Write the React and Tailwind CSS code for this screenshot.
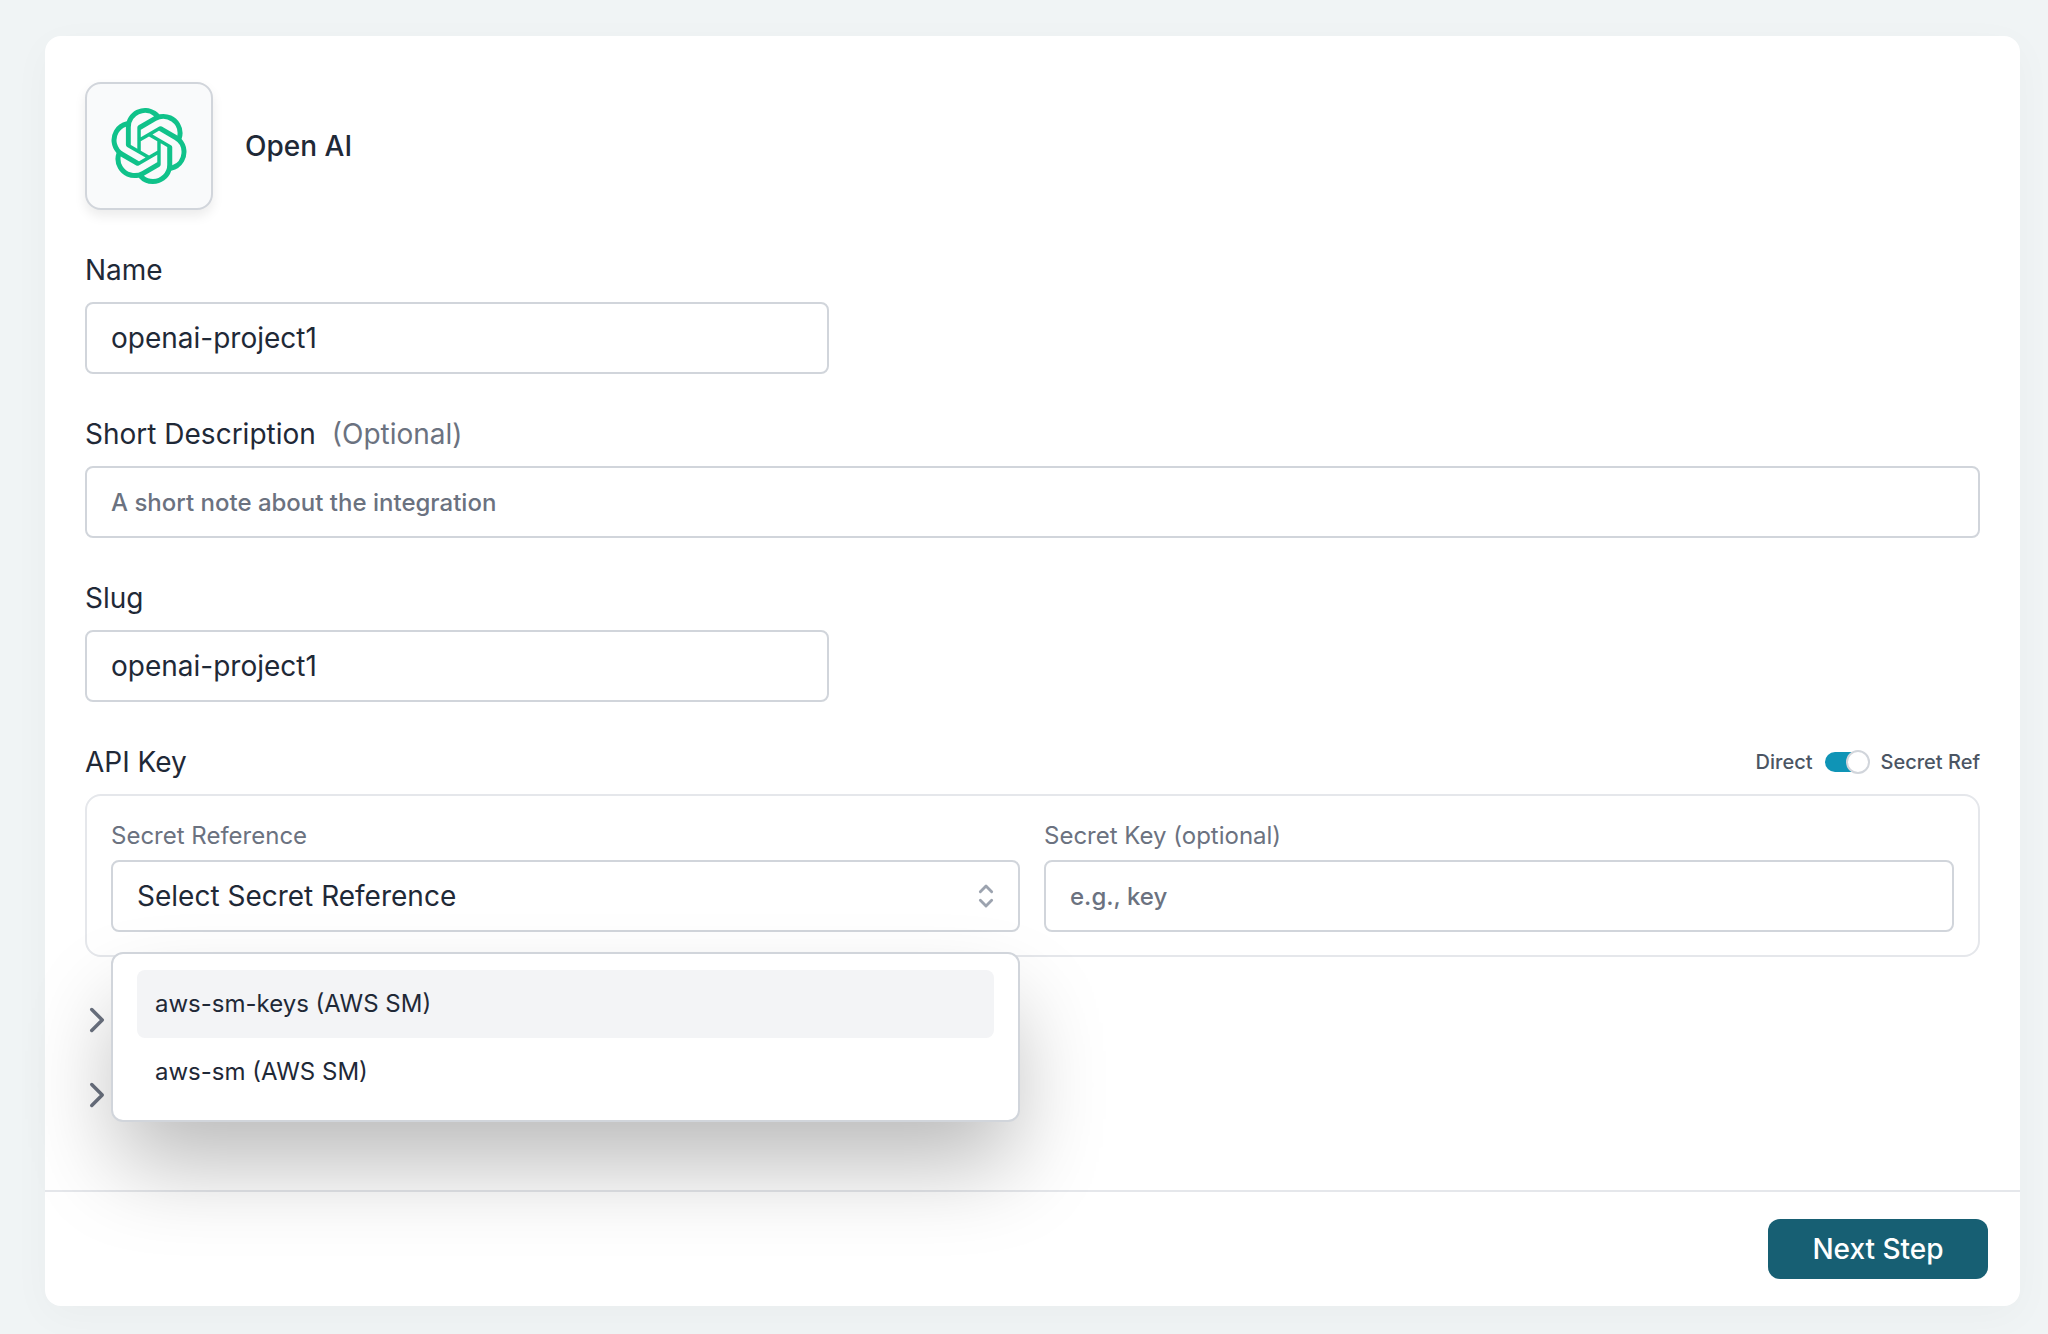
import { ChevronRight } from 'lucide-react'
import { SiOpenai } from 'react-icons/si'

const fieldClass = 'block h-[72px] rounded-[8px] border-2 border-[#d1d5db] bg-white px-[24px] text-[28px] text-[#1f2937] outline-none placeholder:text-[#6b7280]'

function Label({ children, hint }) {
  return (
    <label className="flex items-center gap-[16px] h-[36px] mb-[14px] text-[28px] text-[#1f2937]">
      {children}
      {hint && <span className="text-[#6b7280]">{hint}</span>}
    </label>
  )
}

function Collapsed() {
  return <ChevronRight className="size-[42px] -ml-[9px] text-[#6b7280]" />
}

function Stepper() {
  return (
    <svg viewBox="0 0 24 24" fill="none" stroke="currentColor" strokeWidth="2" strokeLinecap="round" strokeLinejoin="round" className="size-[34px] text-[#9ca3af]">
      <path d="m8 9 4-4 4 4" />
      <path d="m8 15 4 4 4-4" />
    </svg>
  )
}

export default function App() {
  return (
    <div className="min-h-[1334px] bg-[#f0f4f5] pt-[36px] pl-[45px] pr-[28px] font-[Inter,sans-serif]">
      <div className="flex flex-col h-[1270px] rounded-[16px] bg-white shadow-[0_10px_40px_rgba(0,0,0,0.03)]">
        <div className="flex-1 px-[40px] pt-[46px]">
          <div className="flex items-center gap-[32px]">
            <div className="flex items-center justify-center size-[128px] rounded-[16px] border-2 border-[#d1d5db] bg-[#f9fafb] shadow-[0_6px_12px_rgba(0,0,0,0.08)]">
              <SiOpenai className="size-[76px] text-[#10c28a]" />
            </div>
            <span className="text-[28px] font-medium text-[#1f2937]">Open AI</span>
          </div>

          <div className="mt-[42px]">
            <Label>Name</Label>
            <input readOnly defaultValue="openai-project1" className={`${fieldClass} w-[744px]`} />
          </div>

          <div className="mt-[42px]">
            <Label hint="(Optional)">Short Description</Label>
            <input readOnly placeholder="A short note about the integration" className={`${fieldClass} w-full !text-[24px] font-medium`} />
          </div>

          <div className="mt-[42px]">
            <Label>Slug</Label>
            <input readOnly defaultValue="openai-project1" className={`${fieldClass} w-[744px]`} />
          </div>

          <div className="mt-[42px]">
            <div className="flex items-center justify-between h-[36px] mb-[14px]">
              <span className="text-[28px] text-[#1f2937]">API Key</span>
              <div className="flex items-center gap-[12px] text-[20px] font-medium text-[#4b5563]">
                <span>Direct</span>
                <span className="relative block w-[44px] h-[20px] rounded-full bg-[#0f94b6]">
                  <span className="absolute -right-[1px] -top-[2px] size-[24px] rounded-full border-2 border-[#d1d5db] bg-white" />
                </span>
                <span>Secret Ref</span>
              </div>
            </div>

            <div className="relative rounded-[16px] border-2 border-[#e5e7eb] px-[24px] pt-[23px] pb-[23px]">
              <div className="grid grid-cols-[909px_1fr] gap-[24px]">
                <div>
                  <div className="h-[34px] mb-[7px] flex items-center text-[24px] text-[#6b7280]">Secret Reference</div>
                  <div className={`${fieldClass} flex items-center justify-between !pr-[15px]`}>
                    <span>Select Secret Reference</span>
                    <Stepper />
                  </div>
                </div>
                <div>
                  <div className="h-[34px] mb-[7px] flex items-center text-[24px] text-[#6b7280]">Secret Key (optional)</div>
                  <input readOnly placeholder="e.g., key" className={`${fieldClass} w-full !text-[24px] font-medium`} />
                </div>
              </div>

              <div className="absolute z-10 left-[24px] top-[156px] w-[909px] rounded-[12px] border-2 border-[#d1d5db] bg-white px-[24px] pt-[16px] pb-[14px] shadow-[0_48px_90px_-8px_rgba(0,0,0,0.28)]">
                <div className="flex items-center h-[68px] rounded-[8px] bg-[#f3f4f6] px-[18px] text-[24px] text-[#1f2937]">aws-sm-keys (AWS SM)</div>
                <div className="flex items-center h-[68px] px-[18px] text-[24px] text-[#1f2937]">aws-sm (AWS SM)</div>
              </div>
            </div>

            <div className="mt-[42px] flex flex-col gap-[33px]">
              <Collapsed />
              <Collapsed />
            </div>
          </div>
        </div>

        <div className="flex justify-end h-[116px] border-t-2 border-[#e5e7eb] pt-[27px] pr-[32px]">
          <button className="w-[220px] h-[60px] rounded-[12px] bg-[#175f73] text-[28px] font-medium text-white">Next Step</button>
        </div>
      </div>
    </div>
  )
}
